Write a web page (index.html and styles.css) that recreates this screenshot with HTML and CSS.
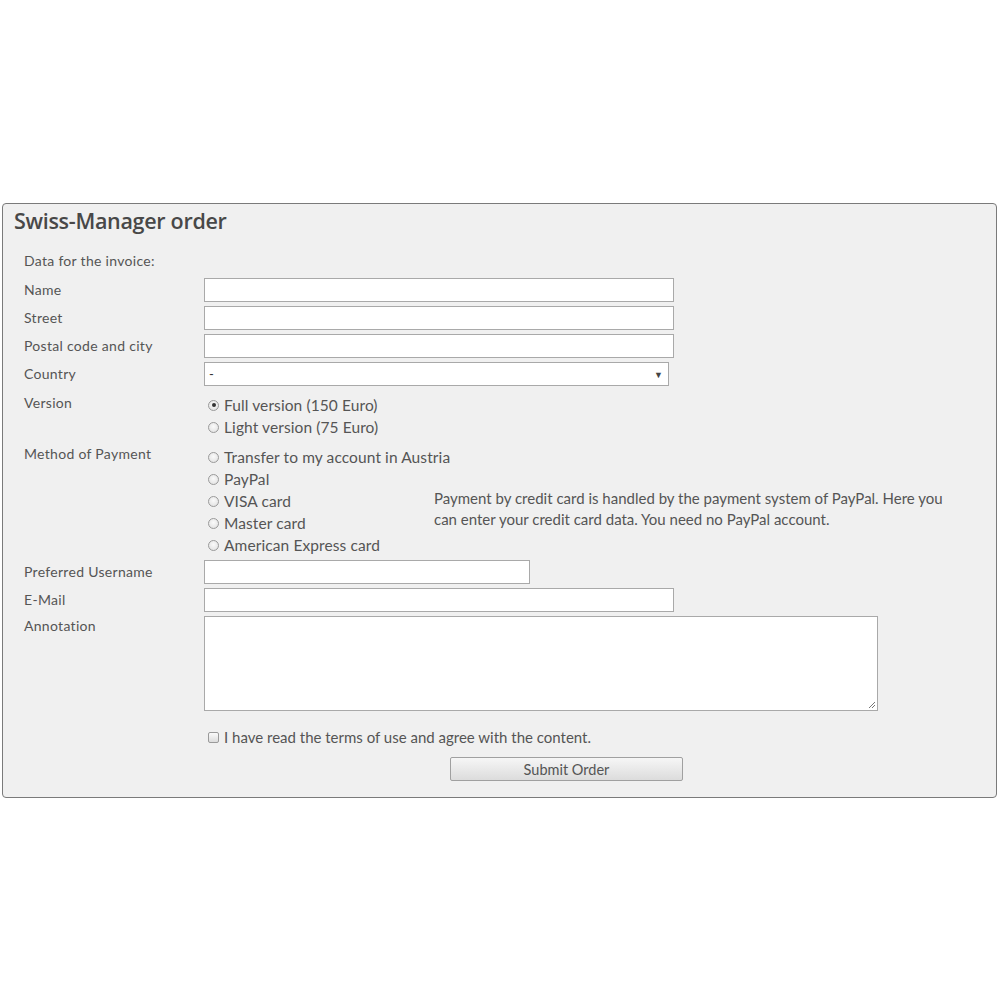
FILE: index.html
```html
<!DOCTYPE html>
<html>
<head>
<meta charset="utf-8">
<link rel="stylesheet" href="styles.css">
</head>
<body>
<div class="panel">
  <h1 class="title">Swiss-Manager order</h1>
  <form class="form">
    <div class="intro">Data for the invoice:</div>

    <label class="lbl">Name</label>
    <div class="field"><input class="txt" type="text"></div>

    <label class="lbl">Street</label>
    <div class="field"><input class="txt" type="text"></div>

    <label class="lbl">Postal code and city</label>
    <div class="field"><input class="txt" type="text"></div>

    <label class="lbl">Country</label>
    <div class="field"><div class="select"><span>-</span><span class="arrow">▼</span></div></div>

    <div class="lbl top version">Version</div>
    <div class="field radios">
      <label class="opt"><span class="radio checked"></span>Full version (150 Euro)</label>
      <label class="opt"><span class="radio"></span>Light version (75 Euro)</label>
    </div>

    <div class="lbl top pay">Method of Payment</div>
    <div class="field payrow">
      <div class="radios paylist">
        <label class="opt"><span class="radio"></span>Transfer to my account in Austria</label>
        <label class="opt"><span class="radio"></span>PayPal</label>
        <label class="opt"><span class="radio"></span>VISA card</label>
        <label class="opt"><span class="radio"></span>Master card</label>
        <label class="opt"><span class="radio"></span>American Express card</label>
      </div>
      <p class="note">Payment by credit card is handled by the payment system of PayPal. Here you can enter your credit card data. You need no PayPal account.</p>
    </div>

    <label class="lbl">Preferred Username</label>
    <div class="field"><input class="txt short" type="text"></div>

    <label class="lbl">E-Mail</label>
    <div class="field"><input class="txt" type="text"></div>

    <div class="lbl top annot">Annotation</div>
    <div class="field"><div class="area"><svg class="grip" width="8" height="8" viewBox="0 0 8 8"><path d="M7 1L1 7M7 4L4 7" stroke="#777" stroke-width="1"/></svg></div></div>

    <div></div>
    <div class="field agree"><span class="check"></span><span class="agree-text">I have read the terms of use and agree with the content.</span></div>

    <div></div>
    <div class="field submitrow"><button type="button" class="btn">Submit Order</button></div>
  </form>
</div>
</body>
</html>
```

FILE: styles.css
```css
html, body {
  margin: 0;
  padding: 0;
  background: #ffffff;
}
body {
  font-family: Lato, "Open Sans", sans-serif;
  color: #555;
}
.panel {
  margin: 203px 3px 0 2px;
  border: 1px solid #7a7a7a;
  border-radius: 4px;
  background: #f0f0f0;
  height: 595px;
  box-sizing: border-box;
}
.title {
  margin: 0;
  padding: 2px 0 0 11px;
  font-size: 21.5px;
  font-weight: 600;
  font-family: "Open Sans", sans-serif;
  color: #484848;
  letter-spacing: -0.3px;
  line-height: 30px;
}
.form {
  display: grid;
  grid-template-columns: 180px 1fr;
  row-gap: 4px;
  padding: 16px 0 0 21px;
  font-size: 14px;
}
.intro {
  grid-column: 1 / 3;
  line-height: 18px;
  height: 18px;
  margin-bottom: 4px;
  letter-spacing: 0.3px;
}
.lbl {
  line-height: 24px;
  font-size: 14px;
  letter-spacing: 0.3px;
}
.lbl.top {
  line-height: 20px;
}
.lbl.version {
  padding-top: 3px;
}
.lbl.pay {
  margin-top: -2px;
}
.lbl.annot {
  padding-top: 0;
}
.field {
  display: flex;
  align-items: center;
}
.txt {
  width: 470px;
  height: 24px;
  box-sizing: border-box;
  border: 1px solid #a9a9a9;
  background: #fff;
  margin: 0;
  padding: 0 4px;
  font: inherit;
}
.txt.short {
  width: 326px;
}
.select {
  width: 465px;
  height: 24px;
  box-sizing: border-box;
  border: 1px solid #a9a9a9;
  background: #fff;
  display: flex;
  align-items: center;
  justify-content: space-between;
  padding: 0 5px 0 4px;
  font-size: 13px;
  color: #333;
}
.arrow {
  font-size: 9px;
  color: #444;
}
.radios {
  display: flex;
  flex-direction: column;
  align-items: flex-start;
}
.opt {
  display: flex;
  align-items: center;
  height: 22px;
  font-size: 15.5px;
  color: #555;
  letter-spacing: 0.1px;
  white-space: nowrap;
}
.radio {
  width: 11px;
  height: 11px;
  box-sizing: border-box;
  border-radius: 50%;
  border: 1px solid #9a9a9a;
  background: radial-gradient(circle at 50% 40%, #fafafa, #dedede);
  margin: 0 5px 0 4px;
  position: relative;
  flex: none;
}
.radio.checked::after {
  content: "";
  position: absolute;
  left: 2.5px;
  top: 2.5px;
  width: 4px;
  height: 4px;
  border-radius: 50%;
  background: #333;
}
.field.radios {
  margin-top: 4px;
  margin-bottom: 4px;
}
.payrow {
  align-items: flex-start;
}
.paylist {
  width: 230px;
  flex: none;
}
.note {
  margin: 42px 0 0 0;
  width: 515px;
  font-size: 15px;
  line-height: 21px;
  color: #555;
}
.area {
  width: 674px;
  height: 95px;
  box-sizing: border-box;
  border: 1px solid #a9a9a9;
  background: #fff;
  position: relative;
}
.grip {
  position: absolute;
  right: 1px;
  bottom: 1px;
}
.agree {
  margin-top: 10px;
  height: 24px;
}
.check {
  width: 11px;
  height: 11px;
  box-sizing: border-box;
  border: 1px solid #9a9a9a;
  border-radius: 2px;
  background: linear-gradient(#fafafa, #dcdcdc);
  margin: 0 5px 0 4px;
  flex: none;
}
.agree-text {
  font-size: 15px;
  color: #555;
}
.submitrow {
  margin-top: 4px;
  padding-left: 246px;
}
.btn {
  width: 233px;
  height: 24px;
  border: 1px solid #a0a0a0;
  border-radius: 2px;
  background: linear-gradient(#f6f6f6, #dcdcdc);
  font-family: Lato, sans-serif;
  font-size: 14.5px;
  color: #555;
  padding: 0;
}
```
